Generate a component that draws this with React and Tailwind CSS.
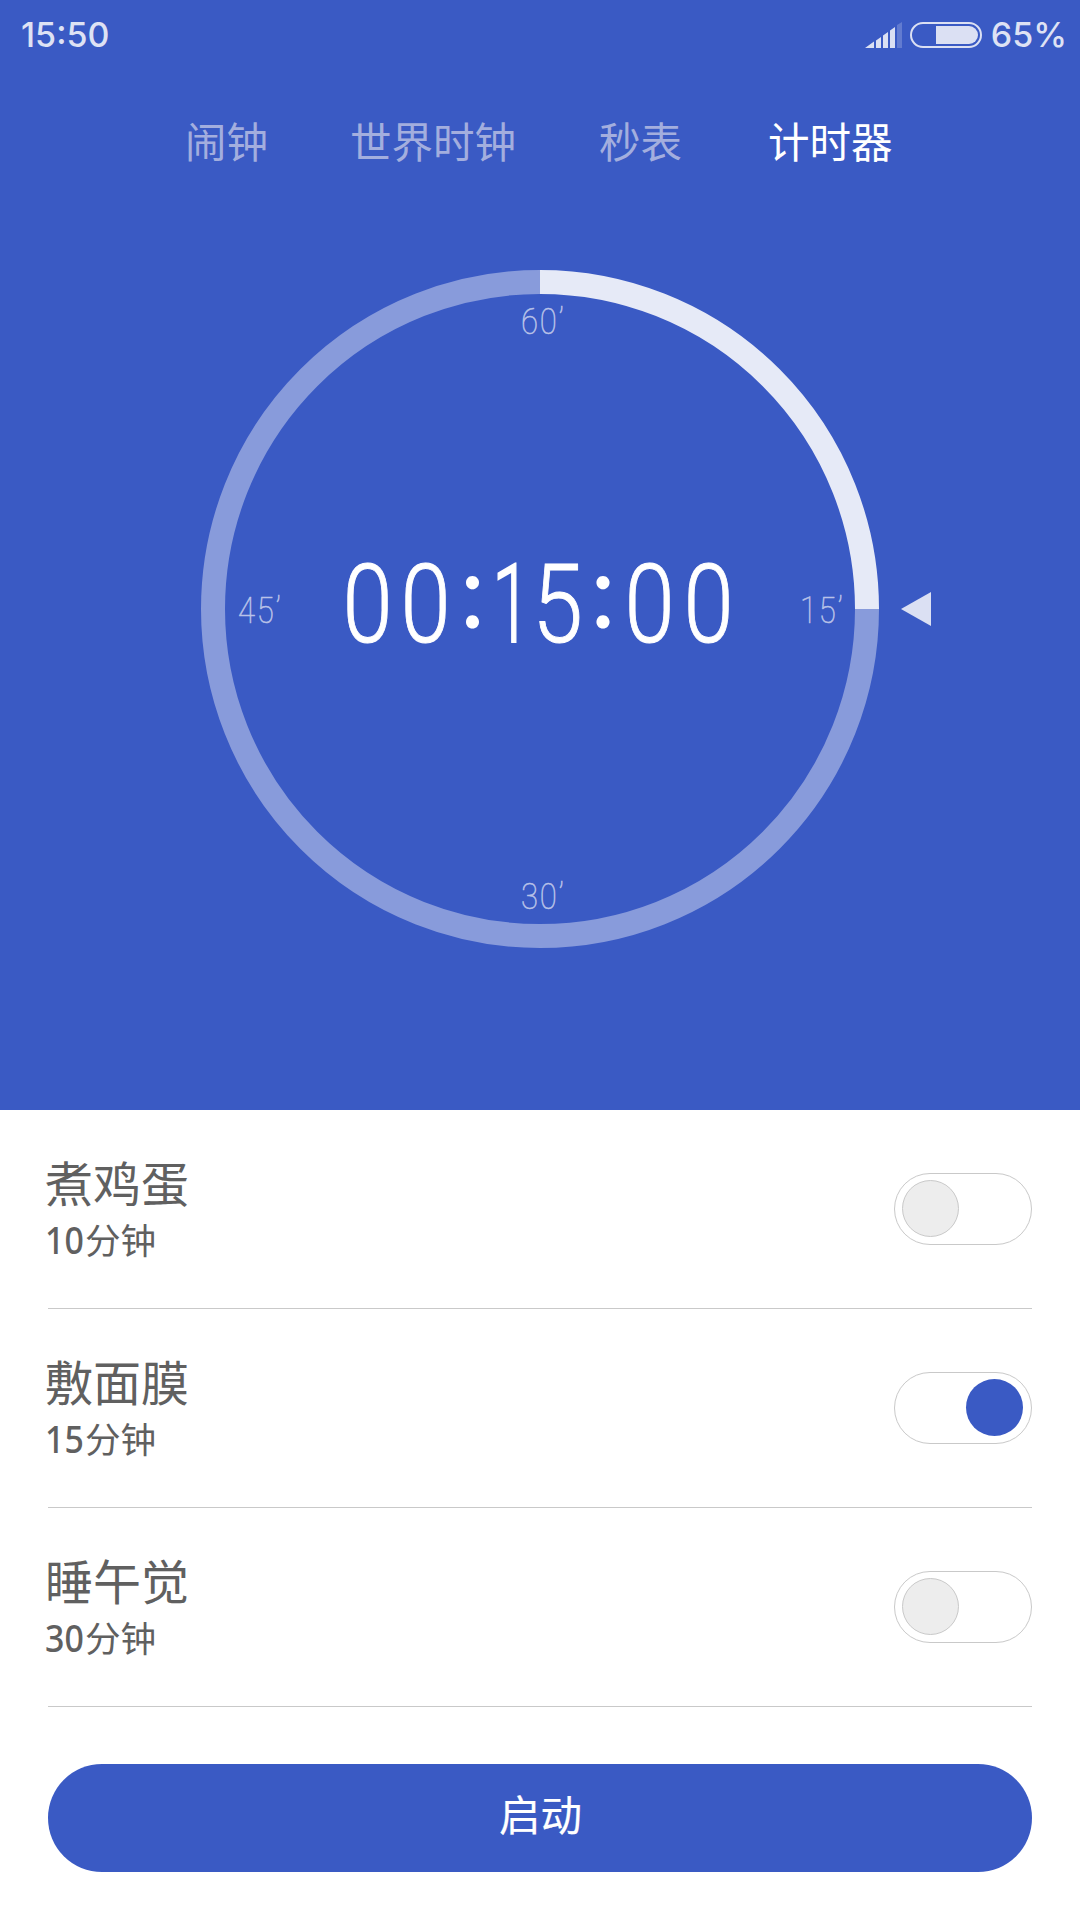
import { useState } from 'react';

const tabs = [
  { label: '闹钟', className: 'ml-[185px] text-[#a3aede]' },
  { label: '世界时钟', className: 'ml-[82px] text-[#a3aede]' },
  { label: '秒表', className: 'ml-[83px] text-[#a3aede]' },
  { label: '计时器', className: 'ml-[86px] text-white' },
];

const initialPresets = [
  { name: '煮鸡蛋', minutes: '10', on: false },
  { name: '敷面膜', minutes: '15', on: true },
  { name: '睡午觉', minutes: '30', on: false },
];

const digit = 'scale-x-[.82] [-webkit-text-stroke:1px_white]';
const narrowOne = 'scale-x-[.64] [-webkit-text-stroke:1.8px_white]';
const five = 'scale-x-[.83] [-webkit-text-stroke:1px_white]';
const colon = "-mt-[17px] font-['Lato'] text-[104px] font-normal";

const cells = [
  ['0', 'w-[58px]', digit],
  ['0', 'w-[58px]', digit],
  [':', 'w-[36px]', colon],
  ['1', 'w-[42px]', narrowOne],
  ['5', 'w-[50px]', five],
  [':', 'w-[41px]', colon],
  ['0', 'w-[52px]', digit],
  ['0', 'w-[66px]', digit],
];

function StatusBar() {
  return (
    <div className="flex h-[70px] items-center justify-between pr-[13px] pl-[21px] font-['Inter'] text-[34px] leading-none font-medium text-[#dee2f4]">
      <span>15:50</span>
      <div className="flex items-center">
        <svg className="mr-2" width="37" height="26" viewBox="0 0 37 26" fill="#dbe0f3">
          <path d="M0 26L9 19.5V26ZM11 18.5L16 15V26H11ZM18 13.5L23 10V26H18ZM25 8.5L30 5V26H25Z" />
          <path d="M32 3L37 0V26H32Z" opacity=".25" />
        </svg>
        <svg className="mr-[9px]" width="72" height="26" viewBox="0 0 72 26">
          <rect x="1" y="1" width="70" height="24" rx="12" fill="none" stroke="#dbe0f3" strokeWidth="2" />
          <path d="M26 4H59A9 9 0 0 1 59 22H26Z" fill="#dbe0f3" />
        </svg>
        <span>65%</span>
      </div>
    </div>
  );
}

function Mark({ value, className }) {
  return (
    <span className={`absolute flex h-8 w-[46px] items-center font-['Roboto'] text-[37px] leading-none font-thin text-[#b9c2e8] ${className}`}>
      <span className="origin-left scale-x-[.84] tracking-[2.2px] whitespace-nowrap [-webkit-text-stroke:0.6px_#b9c2e8]">{value}’</span>
    </span>
  );
}

function Dial() {
  return (
    <div className="relative mx-auto mt-[87px] flex h-[678px] w-[678px] items-center justify-center">
      <svg className="absolute inset-0" width="678" height="678" viewBox="0 0 678 678" fill="none" strokeWidth="24">
        <path d="M339 12A327 327 0 0 1 666 339" stroke="#e6eaf7" />
        <path d="M666 339A327 327 0 1 1 339 12" stroke="#889bdb" />
      </svg>
      <Mark value="60" className="left-[320px] top-[35px]" />
      <Mark value="15" className="left-[599px] top-[324px]" />
      <Mark value="30" className="left-[320px] top-[610px]" />
      <Mark value="45" className="left-[37px] top-[324px]" />
      <div className="relative -top-1 flex h-[110px] shrink-0 font-['Roboto'] text-[110px] leading-[110px] font-light text-white">
        {cells.map(([char, width, style], i) => (
          <span key={i} className={`flex shrink-0 justify-center ${width}`}>
            <span className={style}>{char}</span>
          </span>
        ))}
      </div>
      <svg className="absolute top-[322px] left-[700px]" width="30" height="34" viewBox="0 0 30 34" fill="#dbe0f3">
        <path d="M0 17L30 0V34Z" />
      </svg>
    </div>
  );
}

function Toggle({ on, onClick, label }) {
  return (
    <button
      aria-label={label}
      onClick={onClick}
      className={`mt-[63px] flex h-[72px] w-[138px] rounded-full border border-[#c9c9c9] pt-1.5 ${on ? 'justify-end pr-2' : 'pl-[7px]'}`}
    >
      <span className={`h-[57px] w-[57px] rounded-full ${on ? 'bg-[#3a5ac4]' : 'border border-[#c9c9c9] bg-[#ededed]'}`} />
    </button>
  );
}

export default function App() {
  const [presets, setPresets] = useState(initialPresets);
  const toggle = (index) =>
    setPresets(presets.map((p, i) => (i === index ? { ...p, on: !p.on } : p)));

  return (
    <div className="h-[1920px] w-[1080px] overflow-hidden bg-white font-['Noto_Sans_CJK_SC',sans-serif]">
      <header className="h-[1110px] bg-[#3a5ac4]">
        <StatusBar />
        <nav className="mt-[41px] flex h-[60px] items-center text-[41.5px] leading-none">
          {tabs.map((tab) => (
            <span key={tab.label} className={tab.className}>{tab.label}</span>
          ))}
        </nav>
        <div className="pt-3">
          <Dial />
        </div>
      </header>
      <main className="px-12">
        {presets.map((preset, i) => (
          <div key={preset.name} className="flex h-[199px] justify-between border-b border-[#c9c9c9] text-[#606060]">
            <div className="-ml-[3px] pt-[46px]">
              <div className="text-[48px] leading-[50px]">{preset.name}</div>
              <div className="mt-2.5 flex h-[46px] items-center text-[35.6px] leading-none">
                <span className="w-10 font-['Noto_Sans'] text-[38.5px] font-medium">
                  <span className="inline-block origin-left scale-x-[.88]">{preset.minutes}</span>
                </span>
                <span>分钟</span>
              </div>
            </div>
            <Toggle on={preset.on} label={preset.name} onClick={() => toggle(i)} />
          </div>
        ))}
        <button className="mt-[57px] flex h-[108px] w-full items-center justify-center rounded-full bg-[#3a5ac4] pb-2 pl-px text-[41.5px] leading-none font-normal text-white [-webkit-text-stroke:0.2px_white]">
          启动
        </button>
      </main>
    </div>
  );
}
